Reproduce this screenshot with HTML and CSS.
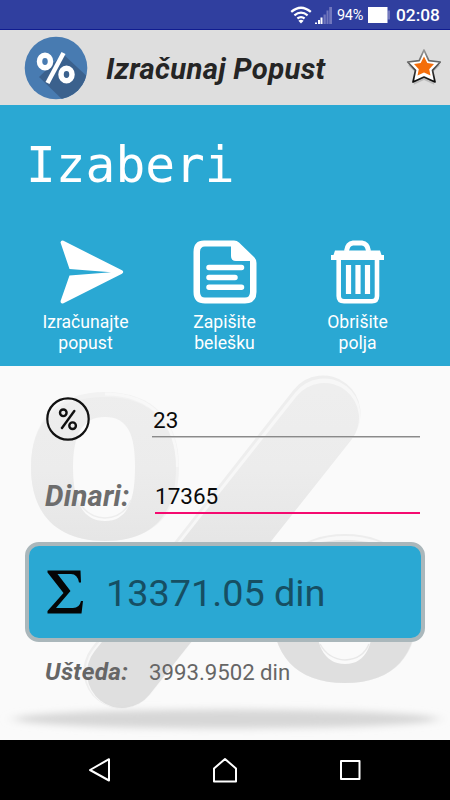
FILE: index.html
```html
<!DOCTYPE html>
<html lang="sr-Latn">
<head>
<meta charset="utf-8">
<title>Izračunaj Popust</title>
<link rel="stylesheet" href="styles.css">
</head>
<body>
<div class="screen">
  <div class="status">
    <svg class="wifi" viewBox="0 0 22 18" width="22" height="18">
      <path d="M1.2 5.9Q11-2.5 20.8 5.9M4.4 9.3Q11 4 17.6 9.3M7.4 12.5Q11 9.8 14.6 12.5" fill="none" stroke="#fff" stroke-width="2.3"/>
      <path d="M11 17.6L8.4 14.7Q11 12.9 13.6 14.7Z" fill="#fff"/>
    </svg>
    <svg class="signal" viewBox="0 0 17 17" width="17" height="17">
      <path d="M0 17v-1.5h2V17zM3 17v-4h2v4zM5.5 17v-6.500h2V17z" fill="#fff"/>
      <path d="M8.500 17V7.500h2.300V17zM11.500 17V3.500h2V17zM14.200 17V0h2.800v17z" fill="#7177bd"/>
    </svg>
    <span class="battery-text">94%</span>
    <svg class="battery" viewBox="0 0 22 16" width="22" height="16">
      <path d="M19.500 3.500H22v9h-2.500z" fill="#7177bd"/><rect width="19.500" height="16" fill="#fff"/>
    </svg>
    <span class="clock">02:08</span>
  </div>

  <header class="header">
    <svg class="logo" viewBox="0 0 64 64" width="64" height="64">
      <defs><clipPath id="disc"><circle cx="32" cy="32" r="31.300"/></clipPath></defs>
      <circle cx="32" cy="32" r="31.300" fill="#487bb1"/>
      <path clip-path="url(#disc)" d="M39 18L68 45V68H43L15 41Z" fill="#3b618d"/>
      <g fill="none" stroke="#fff">
        <ellipse cx="21" cy="25.500" rx="5.500" ry="6.200" stroke-width="5.500"/>
        <ellipse cx="42.500" cy="38.500" rx="5.500" ry="6.200" stroke-width="5.500"/>
        <path d="M39.500 17L23.500 47" stroke-width="4.500"/>
      </g>
    </svg>
    <h1 class="title">Izračunaj Popust</h1>
    <svg class="star" viewBox="0 0 36 38" width="36" height="38">
      <defs><linearGradient id="rim" x1="0" y1="0" x2="0" y2="1"><stop offset="0" stop-color="#999"/><stop offset=".5" stop-color="#555"/><stop offset="1" stop-color="#080808"/></linearGradient></defs>
      <path d="M18 3.500L22.800 13.200L34 14.800L26 22.600L28.300 34.300L18 29.400L7.700 34.300L10 22.600L2 14.800L13.200 13.200Z" fill="#888" opacity=".4" transform="translate(0 1.500)"/>
      <path d="M18 1L22.800 11.600L34.300 13L26.500 21.300L29 33L18 28L7 33L9.500 21.300L1.700 13L13.200 11.600Z" fill="#fff" stroke="url(#rim)" stroke-width="1.700" stroke-linejoin="round"/>
      <path d="M18 7.500L21.300 14L28 15L23.200 20.200L24.500 26.500L18 23.500L11.500 26.500L12.800 20.200L8 15L14.700 14Z" fill="#f46e0b"/>
    </svg>
  </header>

  <section class="actions">
    <h2 class="heading">Izaberi</h2>
    <div class="buttons">
      <div class="action">
        <svg viewBox="0 0 64 64" width="64" height="64">
          <path d="M.5 2.500Q1 0 3.500 .8L62 30.300Q64.500 32 62 33.700L3.500 63.200Q.5 64 .5 61.200L9.500 35.500L51 32.200L9.500 29Z" fill="#fff"/>
        </svg>
        <span>Izračunajte<br>popust</span>
      </div>
      <div class="action">
        <svg viewBox="0 0 64 64" width="64" height="64">
          <path fill="#fff" fill-rule="evenodd" d="M11 .5H41Q44 .5 46 2.500L61 17Q63.500 19.500 63.500 23V52Q63.500 63.500 52 63.500H12Q.5 63.500 .5 52V12Q.5 .5 11 .5ZM12 6.500Q7 6.500 7 12V52Q7 57.500 12 57.500H52Q57 57.500 57 52V21H43Q38 21 38 16V6.500Z"/>
          <path d="M16 27.500H48.500M16 37.500H42M16 47.300H48.500" stroke="#fff" stroke-width="5.500" stroke-linecap="round"/>
        </svg>
        <span>Zapišite<br>belešku</span>
      </div>
      <div class="action">
        <svg viewBox="0 0 64 64" width="64" height="64">
          <path d="M20.500 11Q21.500 3.500 27 3H36Q41.500 3.500 42.500 11" fill="none" stroke="#fff" stroke-width="5"/>
          <path d="M9 10.500H54L55.500 15H58V20H5V15H7.500Z" fill="#fff"/>
          <path d="M12.700 19V56Q12.700 61.200 18 61.200H46Q51 61.200 51 56V19" fill="none" stroke="#fff" stroke-width="4.600"/>
          <path d="M22.500 25V54M32 25V54M41.500 25V54" stroke="#fff" stroke-width="5.200"/>
        </svg>
        <span>Obrišite<br>polja</span>
      </div>
    </div>
  </section>

  <main class="form">
    <svg class="backdrop" viewBox="0 366 450 374" width="450" height="374">
      <defs>
        <linearGradient id="gray" gradientUnits="userSpaceOnUse" x1="0" y1="390" x2="0" y2="620"><stop offset="0" stop-color="#eeeeee"/><stop offset=".35" stop-color="#ececec"/><stop offset="1" stop-color="#dfdfdf"/></linearGradient>
        <filter id="soft" x="-10%" y="-100%" width="120%" height="300%"><feGaussianBlur stdDeviation="7 3.500"/></filter>
      </defs>
      <path d="M105 392C155 392 179 422 179 467S155 541 105 541S31 512 31 467S55 392 105 392Z" fill="#f2f2f2"/>
      <path d="M345 534C395 534 418 564 418 609S395 683 345 683S272 654 272 609S295 534 345 534Z" fill="#ededed"/>
      <path d="M345 536C393 536 416 564 416 609S395 683 345 683S274 654 274 609S297 536 345 536Z" fill="#f8f8f8"/>
      <path d="M323 413L121 671" stroke="#eeeeee" stroke-width="75" stroke-linecap="round"/>
      <path d="M324 415L122 672" stroke="#f7f7f7" stroke-width="73" stroke-linecap="round"/>
      <path d="M105 394C153 394 177 424 177 467" fill="none" stroke="#f8f8f8" stroke-width="3"/>
      <path d="M31 467C31 423 55 397 105 397C153 397 176 425 176 468C176 512 155 541 105 541S31 512 31 467Z" fill="url(#gray)"/>
      <path d="M272 609C272 570 295 540 345 540S417 570 417 609C417 654 395 683 345 683S272 654 272 609Z" fill="url(#gray)"/>
      <path d="M324 418L122 673" stroke="url(#gray)" stroke-width="70" stroke-linecap="round"/>
      <path d="M105 417C128 417 135 435 135 467C135 502 127 521 105 521S73 502 73 467C73 435 82 417 105 417Z" fill="#fafafa"/>
      <path d="M78 500Q86 517 105 518Q124 517 131 500" fill="none" stroke="#ededed" stroke-width="1.500"/>
      <path d="M345 559C368 559 374 577 374 609C374 644 367 664 345 664S315 644 315 609C315 577 322 559 345 559Z" fill="#fafafa"/>
      <path d="M320 644Q328 659 345 660Q363 659 369 644" fill="none" stroke="#e8e8e8" stroke-width="1.500"/>
      <ellipse cx="226" cy="719" rx="212" ry="9.500" fill="#d7d7d7" filter="url(#soft)"/>
    </svg>

    <div class="row row-percent">
      <svg class="percent" viewBox="0 0 44 44" width="44" height="44" fill="none" stroke="#111">
        <circle cx="22" cy="22" r="20.700" stroke-width="2.200"/>
        <circle cx="17.300" cy="15.800" r="3.300" stroke-width="2.400"/>
        <circle cx="26.600" cy="28.700" r="3.300" stroke-width="2.400"/>
        <path d="M28.300 14L16 31" stroke-width="2.400" stroke-linecap="round"/>
      </svg>
      <div class="field field-percent">23</div>
    </div>
    <div class="row row-amount">
      <span class="label">Dinari:</span>
      <div class="field field-amount">17365</div>
    </div>
    <div class="result">
      <svg viewBox="0 0 36 44" width="36" height="44">
        <path d="M.5 .5H33.500L34 12.500H32Q30.500 4 24 4H10.500L23.500 21L9 38H26Q32.500 38 34 31H36L34.500 43.500H.5V41L16.500 23L.5 2.500Z" fill="#050505"/>
      </svg>
      <span>13371.05 din</span>
    </div>
    <div class="saving">
      <span class="saving-label">Ušteda:</span>
      <span class="saving-value">3993.9502 din</span>
    </div>
  </main>

  <nav class="navbar">
    <svg viewBox="0 0 26 26" width="26" height="26"><path d="M22 2.200V23.500L3 13Z"/></svg>
    <svg viewBox="0 0 26 26" width="26" height="26"><path d="M2 11.500L13 2L24 11.500V24.500H2Z"/></svg>
    <svg viewBox="0 0 26 26" width="26" height="26"><path d="M4 4H22.500V22H4Z"/></svg>
  </nav>
</div>
</body>
</html>
```
FILE: styles.css
```css
* { box-sizing: border-box; }
body { margin: 0; font-family: Roboto, "Liberation Sans", sans-serif; }
h1, h2 { margin: 0; }
svg { display: block; flex: none; }
.screen { width: 450px; height: 800px; display: flex; flex-direction: column; overflow: hidden; }

.status {
  height: 30px; background: #303f9f; border-bottom: 1px solid #101c90;
  display: flex; align-items: center; justify-content: flex-end;
  padding: 1px 10px 0 0; color: #fff; flex: none;
}
.signal { margin-left: 3px; }
.battery-text { margin-left: 5px; width: 27px; font-size: 14.5px; letter-spacing: -0.3px; white-space: nowrap; }
.battery { margin-left: 4px; }
.clock { margin-left: 6px; width: 44px; font-size: 17.3px; font-weight: 500; white-space: nowrap; }

.header {
  height: 75px; background: #dedede; display: flex; align-items: center;
  padding: 0 8px 0 24px; flex: none;
}
.title { margin-left: 18px; font-size: 29.3px; font-weight: 700; font-style: italic; color: #252525; white-space: nowrap; letter-spacing: 0.3px; padding-top: 2px; }
.star { margin-left: auto; }

.actions { height: 261px; background: #2aa8d3; color: #fff; padding-top: 31px; flex: none; }
.heading { padding-left: 26px; height: 104px; font: 400 49.5px/58px "DejaVu Sans Mono", monospace; }
.buttons { display: grid; grid-template-columns: 139px 127px 139px; padding-left: 22px; }
.action { display: flex; flex-direction: column; align-items: center; text-align: center; font-size: 17.6px; line-height: 20.500px; gap: 8px; }
.action:first-child { padding-right: 12px; }
.action:first-child svg { margin-left: 12px; }

.form { height: 374px; background: #fafafa; position: relative; flex: none; padding: 31px 25px 0; }
.backdrop { position: absolute; left: 0; top: 0; }
.row { position: relative; display: flex; align-items: flex-start; padding-right: 5px; }
.row-percent { height: 76px; padding-left: 21px; }
.row-amount { height: 69px; padding-left: 20px; }
.field { color: #0a0a0a; font-size: 22.500px; line-height: 28px; }
.field-percent { margin-left: 62px; padding: 9px 1px 0; height: 40px; flex: 1; border-bottom: 1px solid #8a8a8a; box-shadow: 0 1px 0 #c4c4c4; }
.label { width: 110px; padding-top: 5px; font-size: 29.3px; line-height: 36px; font-weight: 700; font-style: italic; color: #6d6d6d; white-space: nowrap; letter-spacing: 0.2px; }
.field-amount { padding: 9px 0 0; height: 41px; flex: 1; border-bottom: 2px solid #f50a70; }
.result {
  position: relative; height: 100px; border: 4px solid #aab7bb; border-radius: 14px; background: #2aa8d3;
  display: flex; align-items: center; padding-left: 18px; color: #164f63; font-size: 37.800px; white-space: nowrap;
}
.result span { margin-left: 23px; padding-top: 2px; }
.saving { position: relative; display: flex; align-items: baseline; padding: 15px 0 0 20px; color: #666; white-space: nowrap; }
.saving-label { width: 104px; font-size: 24.3px; letter-spacing: 0.35px; line-height: 30px; font-weight: 700; font-style: italic; }
.saving-value { font-size: 22.2px; }

.navbar { height: 60px; background: #000; display: flex; justify-content: space-between; align-items: center; padding: 0 87px; flex: none; }
.navbar path { fill: none; stroke: #fff; stroke-width: 2; stroke-linejoin: round; }
```
